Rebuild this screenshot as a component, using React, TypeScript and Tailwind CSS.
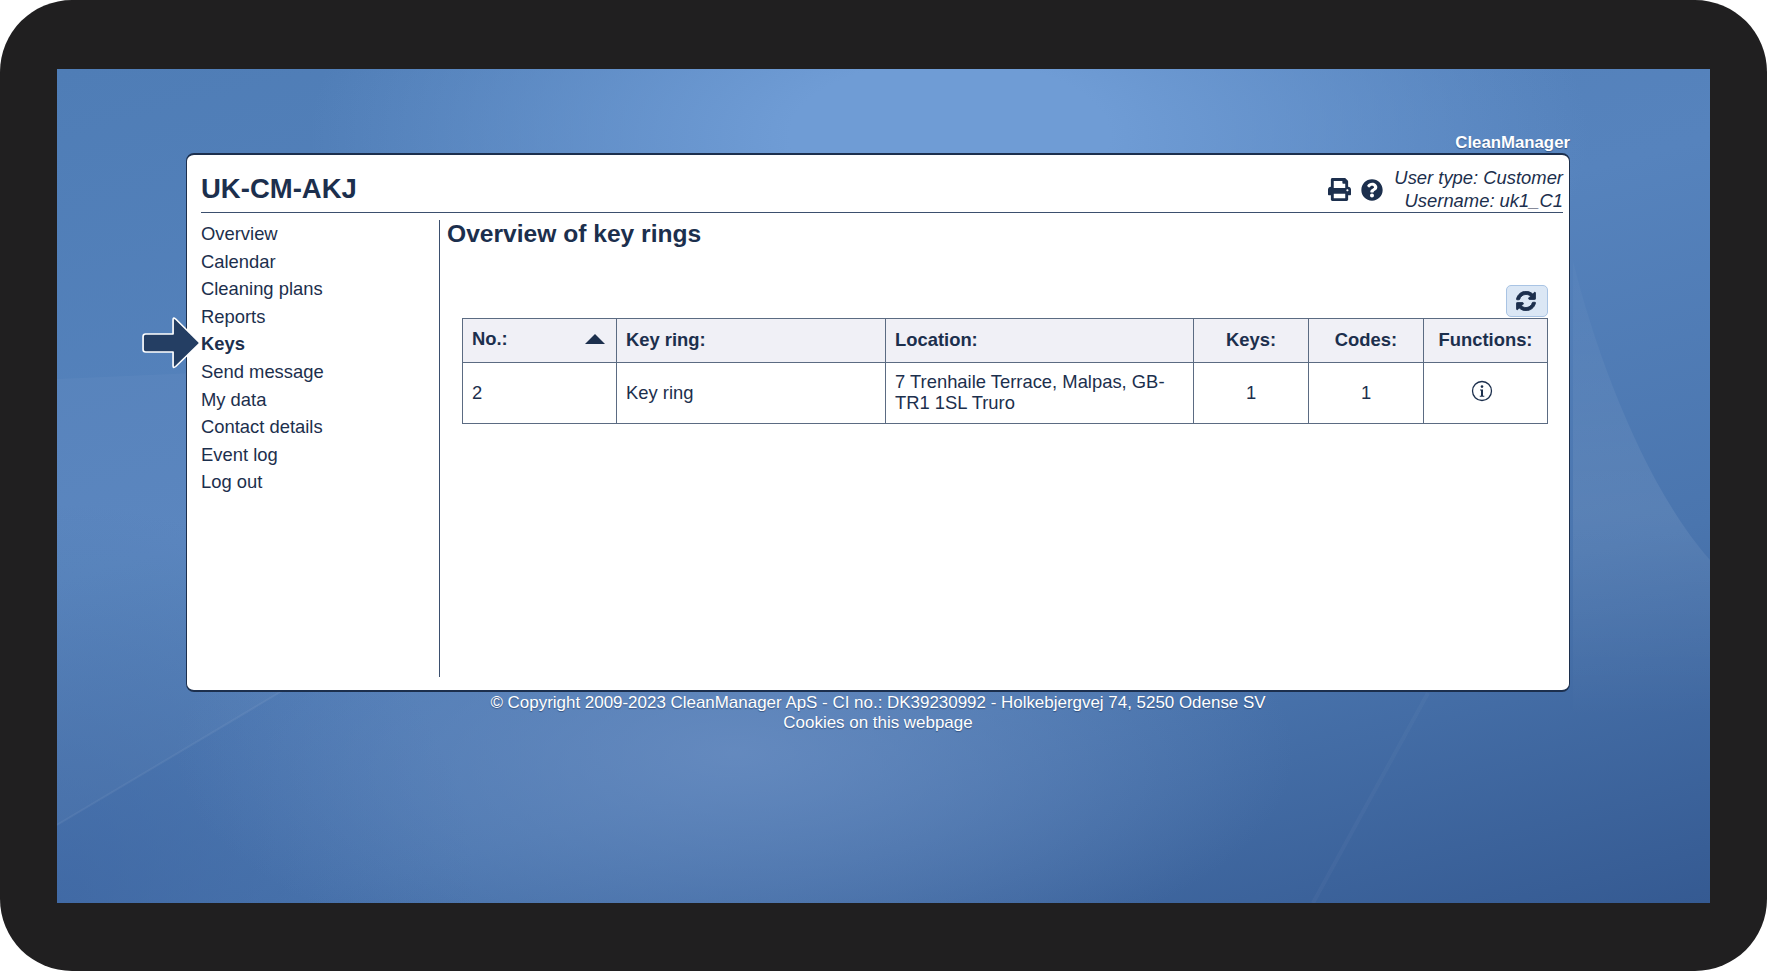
import { FaPrint, FaQuestionCircle, FaSyncAlt } from "react-icons/fa";

const menu = ["Overview", "Calendar", "Cleaning plans", "Reports", "Keys", "Send message", "My data", "Contact details", "Event log", "Log out"];

function Wallpaper() {
  return (
    <svg className="absolute inset-0 h-full w-full" viewBox="0 0 1653 834" preserveAspectRatio="none">
      <defs>
        <linearGradient id="glow" x1="0" y1="190" x2="0" y2="650" gradientUnits="userSpaceOnUse">
          <stop offset="0" stopColor="#ffffff" stopOpacity="0.02" />
          <stop offset="0.55" stopColor="#ffffff" stopOpacity="0.08" />
          <stop offset="1" stopColor="#ffffff" stopOpacity="0" />
        </linearGradient>
      </defs>
      <path d="M0 756 L225 622 L225 300 L0 310 Z" fill="#ffffff" opacity="0.03" />
      <path d="M0 756 L225 622" stroke="#ffffff" strokeOpacity="0.06" strokeWidth="2" fill="none" />
      <path d="M1256 834 L1371 624" stroke="#ffffff" strokeOpacity="0.03" strokeWidth="4" fill="none" />
      <path d="M1516 192 C1540 290 1590 420 1653 491 L1653 650 L1516 650 Z" fill="url(#glow)" />
    </svg>
  );
}

function InfoIcon() {
  return (
    <svg width="22" height="22" viewBox="0 0 22 22" className="mx-auto">
      <circle cx="11" cy="11" r="9.5" fill="none" stroke="#1c2f4d" strokeWidth="1.3" />
      <circle cx="11" cy="6.6" r="1.3" fill="#1c2f4d" />
      <path d="M9 9.5h3v6.2h1.3v1H8.8v-1H10v-5.2H9z" fill="#1c2f4d" />
    </svg>
  );
}

function NavArrow() {
  return (
    <svg className="absolute left-[-60px] top-[-14px]" width="60" height="54" viewBox="0 0 58 54" preserveAspectRatio="none">
      <path d="M2 20.5 Q2 18 4.5 18 H31 V3.5 Q31 1 33.5 3 L56 26 Q57 27 56 28 L33.5 50.5 Q31 52.5 31 50 V36 H4.5 Q2 36 2 33.5 Z" fill="#243e63" stroke="#ffffff" strokeWidth="1.6" strokeLinejoin="round" />
    </svg>
  );
}

export default function App() {
  return (
    <div className="h-[971px] w-[1767px] overflow-hidden bg-white font-['Liberation_Sans',Arial,sans-serif]">
      <div className="h-[971px] rounded-[72px] bg-[#201f20] px-[57px] pt-[69px]">
        <div className="relative h-[834px] w-[1653px] overflow-hidden bg-[radial-gradient(ellipse_640px_300px_at_54%_8%,#6f9cd5_0%,#6f9cd5_25%,rgba(111,156,213,0)_100%),radial-gradient(ellipse_560px_230px_at_41%_82%,rgba(106,142,194,0.8)_0%,rgba(106,142,194,0)_100%),radial-gradient(ellipse_420px_400px_at_0%_100%,rgba(60,100,160,0.7)_0%,rgba(60,100,160,0)_100%),linear-gradient(165deg,#4f7db6_0%,#5683bd_40%,#4a75ae_70%,#355a92_100%)]">
          <Wallpaper />
          <div className="relative ml-[129px] w-[1384px] pt-[64px]">
            <div className="text-right text-[16.8px] leading-[20px] font-bold text-white [text-shadow:0_1px_1px_rgba(20,40,80,0.5)]">CleanManager</div>
            <div className="h-[539px] rounded-[8px] border border-y-2 border-[#1c2f4d] bg-white pl-[14px] pr-[6px] text-[#1c2f4d]">
              <div className="flex h-[58px] items-end justify-between border-b border-[#3b4f6e]">
                <div className="pb-[8px] text-[27.5px] leading-[31px] font-bold">UK-CM-AKJ</div>
                <div className="flex items-center gap-[10px]">
                  <FaPrint className="h-[23px] w-[23px]" />
                  <FaQuestionCircle className="h-[22px] w-[22px]" />
                  <div className="ml-[1px] text-right text-[18.4px] leading-[22.5px] italic">
                    <div>User type: Customer</div>
                    <div>Username: uk1_C1</div>
                  </div>
                </div>
              </div>
              <div className="mt-[7px] flex h-[457px]">
                <nav className="w-[239px] shrink-0 border-r border-[#3b4f6e] text-[18.4px] leading-[27.6px]">
                  {menu.map((item) =>
                    item === "Keys" ? (
                      <div key={item} className="relative font-bold">
                        <NavArrow />
                        <span className="relative">{item}</span>
                      </div>
                    ) : (
                      <div key={item}>{item}</div>
                    )
                  )}
                </nav>
                <main className="min-w-0 flex-1 pl-[7px]">
                  <h1 className="text-[24.6px] leading-[28px] font-bold">Overview of key rings</h1>
                  <div className="ml-[15px] mt-[37px] w-[1086px]">
                    <div className="mb-[1px] flex justify-end">
                      <button className="flex h-[32px] w-[42px] items-center justify-center rounded-[5px] border border-[#a9c4e4] bg-[#dbe7f5] pr-[2px]">
                        <FaSyncAlt className="h-[20px] w-[20px] text-[#1c2f4d]" stroke="currentColor" strokeWidth={22} />
                      </button>
                    </div>
                    <table className="w-[1086px] table-fixed border-collapse text-[18.4px] leading-[21px]">
                      <thead>
                        <tr className="h-[44px] bg-[#f0f0f6] font-bold">
                          <th className="w-[154px] border border-[#5b6b82] px-[9px] pb-[2px] text-left font-bold">
                            <div className="flex items-center justify-between pb-[2px] pr-[2px]">
                              <span>No.:</span>
                              <svg width="20" height="10" viewBox="0 0 20 10"><path d="M10 0 L20 10 H0 Z" fill="#1c2f4d" /></svg>
                            </div>
                          </th>
                          <th className="w-[269px] border border-[#5b6b82] px-[9px] pb-[2px] text-left font-bold">Key ring:</th>
                          <th className="w-[308px] border border-[#5b6b82] px-[9px] pb-[2px] text-left font-bold">Location:</th>
                          <th className="w-[115px] border border-[#5b6b82] pb-[2px] text-center font-bold">Keys:</th>
                          <th className="w-[115px] border border-[#5b6b82] pb-[2px] text-center font-bold">Codes:</th>
                          <th className="border border-[#5b6b82] pb-[2px] text-center font-bold">Functions:</th>
                        </tr>
                      </thead>
                      <tbody>
                        <tr className="h-[61px]">
                          <td className="border border-[#5b6b82] px-[9px] pb-[2px]">2</td>
                          <td className="border border-[#5b6b82] px-[9px] pb-[2px]">Key ring</td>
                          <td className="border border-[#5b6b82] px-[9px] pb-[2px]">7 Trenhaile Terrace, Malpas, GB-TR1 1SL Truro</td>
                          <td className="border border-[#5b6b82] pb-[2px] text-center">1</td>
                          <td className="border border-[#5b6b82] pb-[2px] text-center">1</td>
                          <td className="border border-[#5b6b82] pb-[5px] pr-[7px] text-center"><InfoIcon /></td>
                        </tr>
                      </tbody>
                    </table>
                  </div>
                </main>
              </div>
            </div>
            <div className="pt-[1px] text-center text-[16.95px] leading-[19.5px] text-white [text-shadow:0_1px_1px_rgba(20,40,80,0.5)]">
              <div>© Copyright 2009-2023 CleanManager ApS - CI no.: DK39230992 - Holkebjergvej 74, 5250 Odense SV</div>
              <div>Cookies on this webpage</div>
            </div>
          </div>
        </div>
      </div>
    </div>
  );
}
